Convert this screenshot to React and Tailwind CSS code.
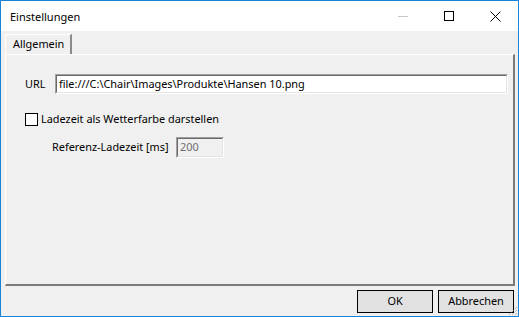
import React from "react"

const Sunken = ({ className, children }) => (
  <div className={`border border-t-[#a0a0a0] border-l-[#a0a0a0] border-b-white border-r-white ${className}`}>
    <div className="h-full border border-t-[#696969] border-l-[#696969] border-b-[#e3e3e3] border-r-[#e3e3e3] flex items-center">
      {children}
    </div>
  </div>
)

export default function App() {
  return (
    <div className="w-[519px] h-[317px] border border-[#1883d7] bg-[#f0f0f0] flex flex-col overflow-hidden text-[10.9px] text-black font-['Noto_Sans','Open_Sans',sans-serif] leading-none whitespace-nowrap">
      {/* Title bar */}
      <div className="h-[30px] bg-white flex items-center shrink-0">
        <span className="pl-[9px] flex-1 text-[11px]">Einstellungen</span>
        <div className="flex h-full">
          <div className="w-[46px] flex items-center justify-center">
            <div className="w-[10px] h-px bg-[#c8c8c8]" />
          </div>
          <div className="w-[46px] flex items-center justify-center">
            <div className="w-[10px] h-[10px] border border-black" />
          </div>
          <div className="w-[46px] flex items-center justify-center">
            <svg width="11" height="11" viewBox="0 0 11 11">
              <path d="M0.5 0.5 L10.5 10.5 M10.5 0.5 L0.5 10.5" stroke="#000" strokeWidth="1" />
            </svg>
          </div>
        </div>
      </div>

      {/* Tabs + panel */}
      <div className="flex-1 flex flex-col pl-[4px] pr-[3px] pt-[3px]">
        <div className="flex">
          <div className="w-[67px] h-[20px] border-t border-l border-white border-r-2 border-r-[#8a8a8a] flex items-center pl-[7px] rounded-tl-[1px]">
            Allgemein
          </div>
        </div>
        <div className="h-[232px] border-t border-l border-white border-r-2 border-b-2 border-r-[#7a7a7a] border-b-[#7a7a7a] flex flex-col">
          <div className="flex items-center h-[20px] mt-[19px] pl-[19px] pr-[5px]">
            <span className="w-[30px]">URL</span>
            <Sunken className="flex-1 h-[20px] bg-white">
              <span className="pl-[2px]">file:///C:\Chair\Images\Produkte\Hansen 10.png</span>
            </Sunken>
          </div>
          <div className="flex items-center mt-[19px] pl-[19px]">
            <div className="w-[13px] h-[13px] border border-black bg-white" />
            <span className="ml-[3px]">Ladezeit als Wetterfarbe darstellen</span>
          </div>
          <div className="flex items-center mt-[11px] pl-[46px]">
            <span className="w-[124px]">Referenz-Ladezeit [ms]</span>
            <Sunken className="w-[48px] h-[21px] bg-[#f0f0f0]">
              <span className="pl-[2px] text-[#6d6d6d]">200</span>
            </Sunken>
          </div>
        </div>
      </div>

      {/* Buttons */}
      <div className="h-[30px] shrink-0 flex items-start justify-end gap-[5px] pt-[4px] pr-[4px] relative">
        <button className="w-[76px] h-[23px] border border-black bg-[#e1e1e1] flex items-center justify-center">
          OK
        </button>
        <button className="w-[76px] h-[23px] border border-black bg-[#e1e1e1] flex items-center justify-center">
          Abbrechen
        </button>
        <svg className="absolute right-0 bottom-0" width="10" height="10" viewBox="0 0 10 10">
          <path d="M9 1 L1 9 M9 4 L4 9 M9 7 L7 9" stroke="#a0a0a0" strokeWidth="1" strokeDasharray="1 1" />
        </svg>
      </div>
    </div>
  )
}
